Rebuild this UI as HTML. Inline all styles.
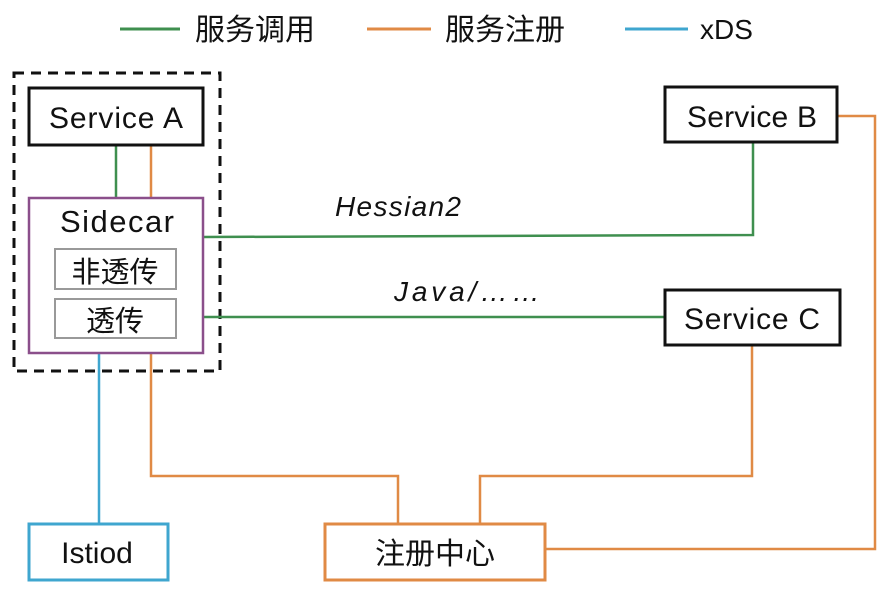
<!DOCTYPE html>
<html><head><meta charset="utf-8"><style>
html,body{margin:0;padding:0;background:#fff;width:889px;height:594px;overflow:hidden}
svg{display:block}
text{font-family:"Liberation Sans","Noto Sans CJK SC",sans-serif;fill:#111}
</style></head><body>
<svg width="889" height="594" viewBox="0 0 889 594" xmlns="http://www.w3.org/2000/svg">
<line x1="120" y1="29" x2="180" y2="29" stroke="#3f8f4f" stroke-width="3"/>
<text x="195" y="40" font-size="30">服务调用</text>
<line x1="367" y1="29" x2="431" y2="29" stroke="#e08a45" stroke-width="3"/>
<text x="445" y="40" font-size="30">服务注册</text>
<line x1="625" y1="29" x2="688" y2="29" stroke="#3fa6cf" stroke-width="3"/>
<text x="700" y="39" font-size="28">xDS</text>

<rect x="14" y="73" width="206" height="298" fill="none" stroke="#111" stroke-width="3" stroke-dasharray="10,7"/>

<line x1="116" y1="145" x2="116" y2="198" stroke="#3f8f4f" stroke-width="2.5"/>
<line x1="151" y1="145" x2="151" y2="198" stroke="#e08a45" stroke-width="2.5"/>
<polyline points="203,237 753,235 753,143" fill="none" stroke="#3f8f4f" stroke-width="2.5"/>
<line x1="203" y1="317" x2="664" y2="317" stroke="#3f8f4f" stroke-width="2.5"/>
<line x1="99" y1="353" x2="99" y2="523" stroke="#3fa6cf" stroke-width="2.5"/>
<polyline points="151,353 151,476 398,476 398,523" fill="none" stroke="#e08a45" stroke-width="2.5"/>
<polyline points="480,523 480,476 752,476 752,345" fill="none" stroke="#e08a45" stroke-width="2.5"/>
<polyline points="837,116 875,116 875,549 545,549" fill="none" stroke="#e08a45" stroke-width="2.5"/>

<rect x="29" y="88" width="174" height="57" fill="#fff" stroke="#111" stroke-width="3"/>
<text x="116" y="128" font-size="30" text-anchor="middle" textLength="134">Service A</text>
<rect x="29" y="198" width="174" height="155" fill="#fff" stroke="#8b4f8b" stroke-width="2.5"/>
<text x="117" y="232" font-size="31" text-anchor="middle" textLength="114">Sidecar</text>
<rect x="55" y="249" width="121" height="40" fill="#fff" stroke="#999" stroke-width="2"/>
<text x="115" y="282" font-size="29" text-anchor="middle">非透传</text>
<rect x="55" y="299" width="121" height="39" fill="#fff" stroke="#999" stroke-width="2"/>
<text x="115" y="331" font-size="29" text-anchor="middle">透传</text>

<rect x="665" y="87" width="172" height="55" fill="#fff" stroke="#111" stroke-width="3"/>
<text x="752" y="127" font-size="30" text-anchor="middle" textLength="130">Service B</text>
<rect x="665" y="290" width="175" height="55" fill="#fff" stroke="#111" stroke-width="3"/>
<text x="752" y="329" font-size="30" text-anchor="middle" textLength="136">Service C</text>

<text x="335" y="216" font-size="28" font-style="italic" textLength="126">Hessian2</text>
<text x="394" y="301" font-size="28" font-style="italic" textLength="146">Java/……</text>

<rect x="29" y="524" width="139" height="56" fill="#fff" stroke="#3fa6cf" stroke-width="3"/>
<text x="97" y="563" font-size="30" text-anchor="middle">Istiod</text>
<rect x="325" y="524" width="220" height="56" fill="#fff" stroke="#e08a45" stroke-width="3"/>
<text x="435" y="564" font-size="30" text-anchor="middle">注册中心</text>
</svg>
</body></html>
